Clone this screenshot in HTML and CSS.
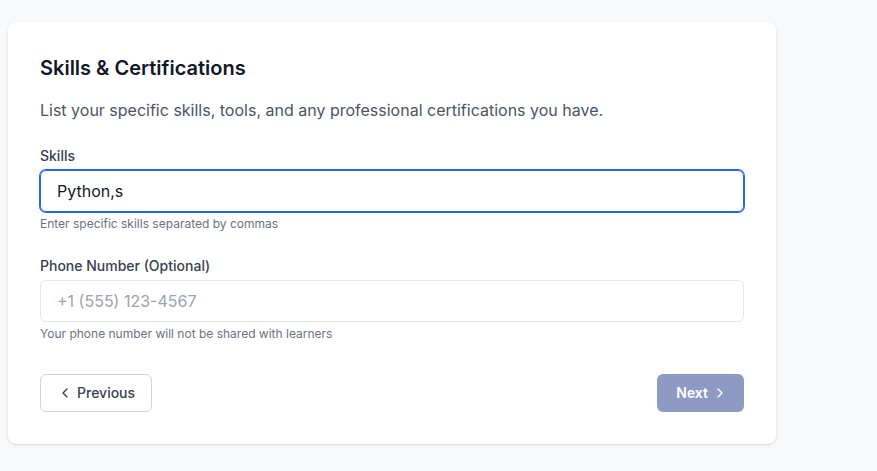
FILE: index.html
```html
<!DOCTYPE html>
<html lang="en">
<head>
<meta charset="utf-8">
<link rel="stylesheet" href="styles.css">
</head>
<body>
<div class="card">
  <h2 class="title">Skills &amp; Certifications</h2>
  <p class="desc">List your specific skills, tools, and any professional certifications you have.</p>
  <div class="field">
    <label class="label">Skills</label>
    <div class="input focused">Python,s</div>
    <p class="help">Enter specific skills separated by commas</p>
  </div>
  <div class="field field-last">
    <label class="label">Phone Number (Optional)</label>
    <div class="input placeholder">+1 (555) 123-4567</div>
    <p class="help">Your phone number will not be shared with learners</p>
  </div>
  <div class="actions">
    <button class="btn btn-prev">
      <svg width="16" height="16" viewBox="0 0 24 24" fill="none" stroke="currentColor" stroke-width="2" stroke-linecap="round" stroke-linejoin="round"><path d="m15 18-6-6 6-6"/></svg>
      <span>Previous</span>
    </button>
    <button class="btn btn-next">
      <span>Next</span>
      <svg width="16" height="16" viewBox="0 0 24 24" fill="none" stroke="currentColor" stroke-width="2" stroke-linecap="round" stroke-linejoin="round"><path d="m9 18 6-6-6-6"/></svg>
    </button>
  </div>
</div>
</body>
</html>
```
FILE: styles.css
```css
* { box-sizing: border-box; }
html, body { margin: 0; }
body {
  background: #f8f9fb;
  padding: 22px 8px;
  font-family: Inter, "Noto Sans", sans-serif;
  color: #111827;
}
.card {
  width: 768px;
  background: #fff;
  border-radius: 8px;
  box-shadow: 0 1px 3px rgba(0,0,0,0.10), 0 1px 2px rgba(0,0,0,0.06);
  padding: 32px;
}
.title {
  margin: 0 0 16px;
  font-size: 20px;
  line-height: 28px;
  font-weight: 600;
  color: #111827;
}
.desc {
  margin: 0 0 24px;
  font-size: 16px;
  line-height: 24px;
  color: #4b5563;
}
.field { margin-bottom: 24px; }
.field-last { margin-bottom: 32px; }
.label {
  display: block;
  font-size: 14px;
  line-height: 20px;
  font-weight: 500;
  color: #374151;
  margin-bottom: 4px;
}
.input {
  height: 42px;
  border: 1px solid #e5e7eb;
  border-radius: 6px;
  padding: 0 16px;
  display: flex;
  align-items: center;
  font-size: 16px;
  color: #111827;
}
.input.focused {
  border-color: #2563eb;
  box-shadow: 0 0 0 1px #2563eb;
}
.input.placeholder { color: #9ca3af; }
.help {
  margin: 4px 0 0;
  font-size: 12px;
  line-height: 16px;
  color: #6b7280;
}
.actions {
  display: flex;
  justify-content: space-between;
  align-items: center;
}
.btn {
  display: inline-flex;
  align-items: center;
  gap: 4px;
  height: 38px;
  border-radius: 6px;
  font-family: inherit;
  font-size: 14px;
  line-height: 20px;
  font-weight: 500;
  cursor: pointer;
}
.btn-prev {
  background: #fff;
  border: 1px solid #d1d5db;
  color: #374151;
  padding: 0 16px;
}
.btn-next {
  background: #1e3a8a;
  opacity: 0.5;
  border: 1px solid transparent;
  color: #fff;
  font-weight: 600;
  padding: 0 15px 0 18px;
}
```
